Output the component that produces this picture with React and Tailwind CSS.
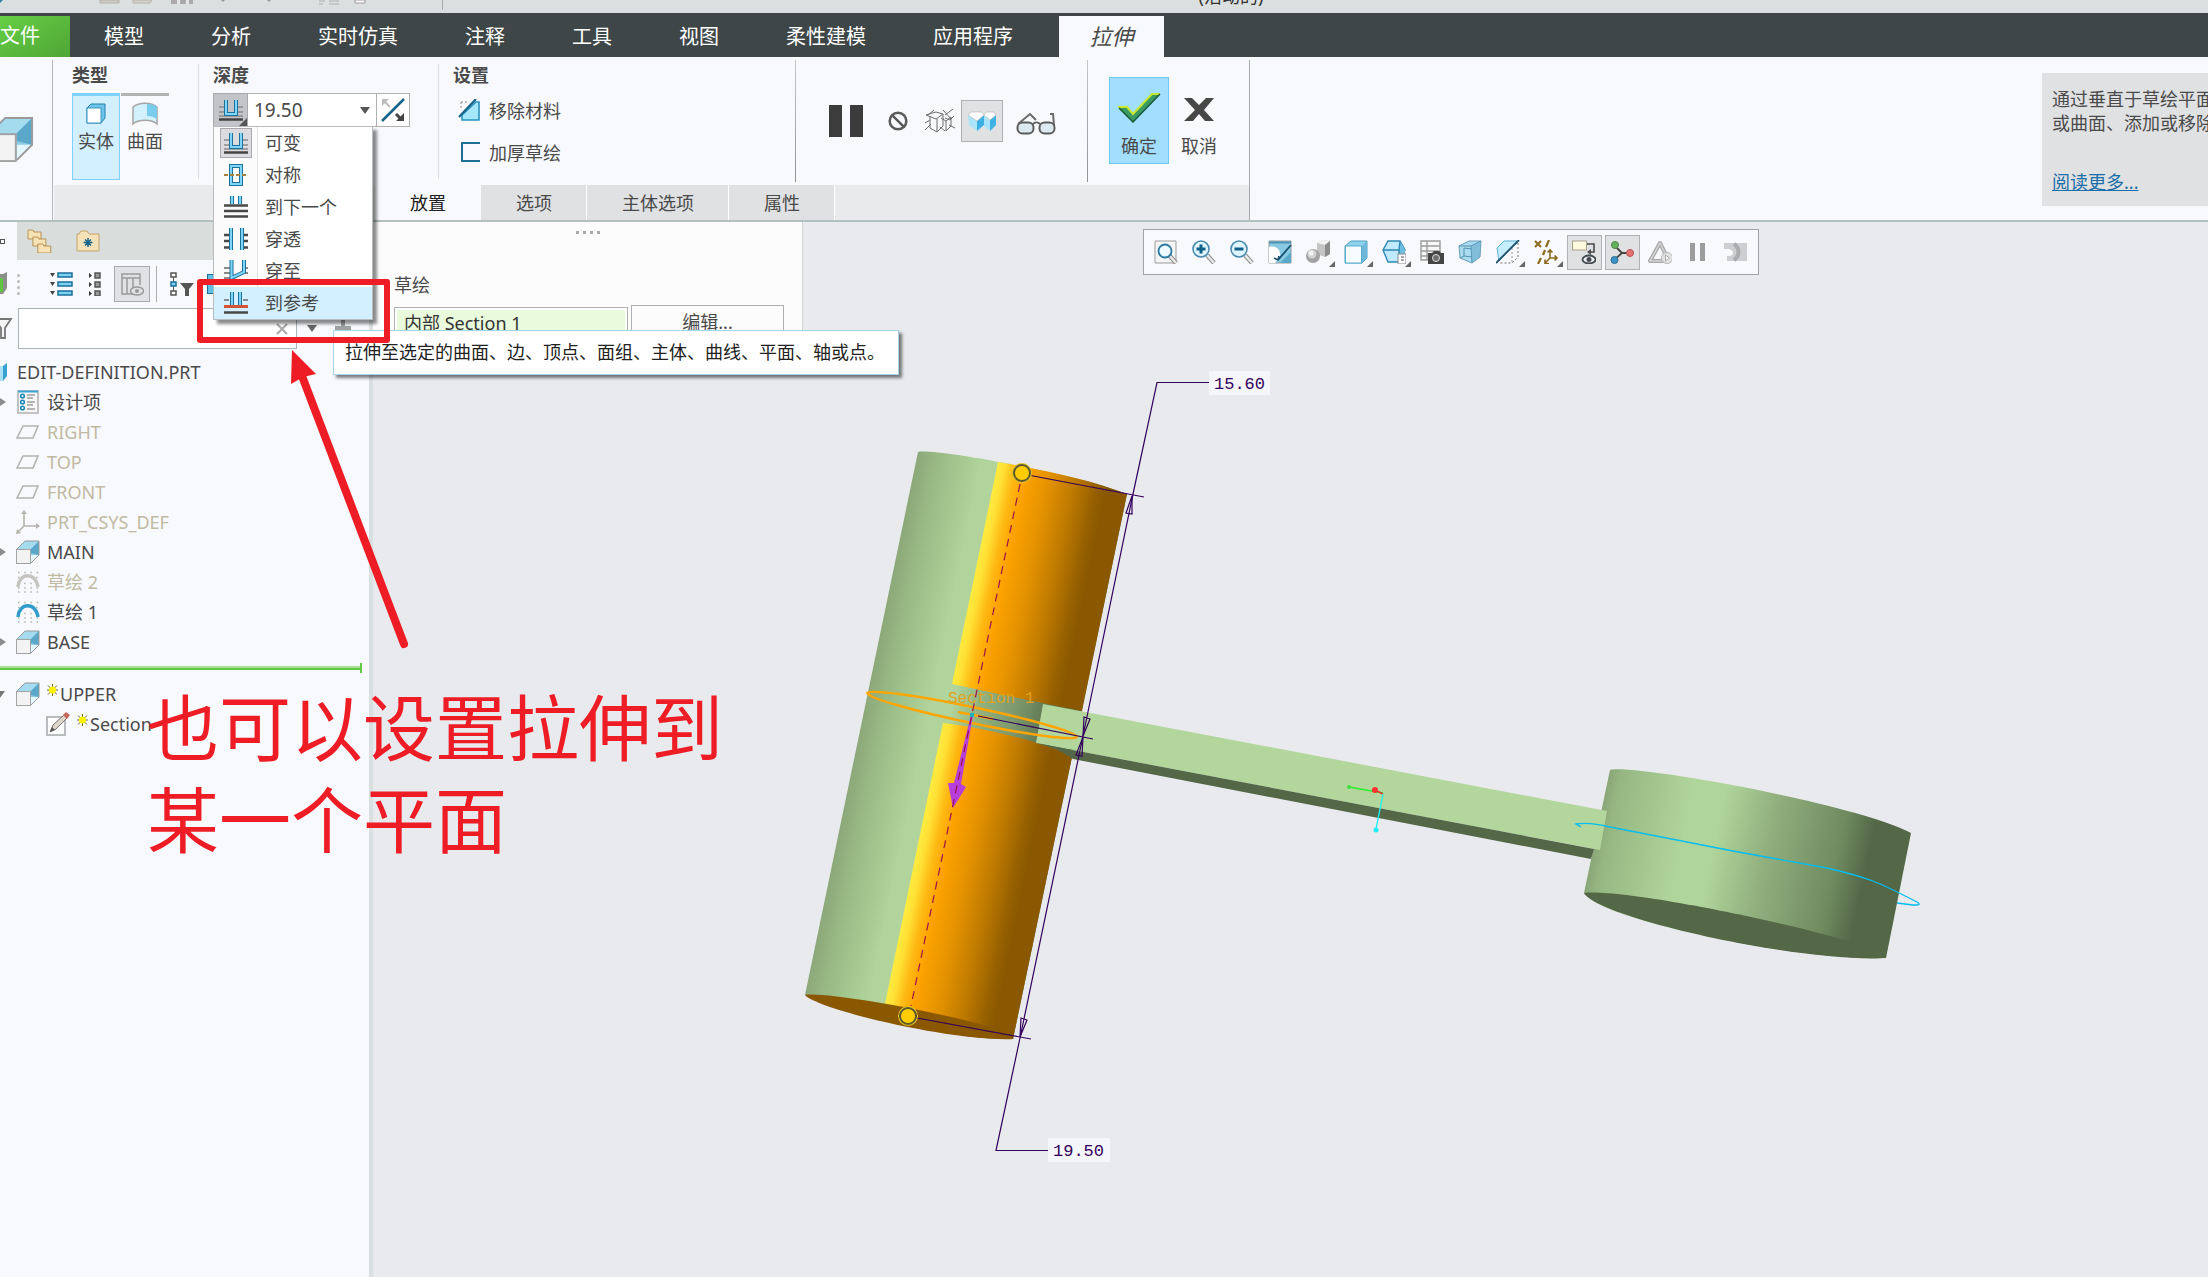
import { Ban } from 'lucide-react'

function Icon({ w = 24, h = 24, children }) {
  return (
    <svg width={w} height={h} viewBox={`0 0 ${w} ${h}`} fill="none" className="block shrink-0" aria-hidden="true">
      {children}
    </svg>
  )
}

/* ---------- feature icons ---------- */

function ExtrudeIcon({ size = 24 }) {
  return (
    <svg width={size} height={size} viewBox="0 0 24 24" fill="none" className="block shrink-0" aria-hidden="true">
      <path d="M1 9 9 1h14v14l-8 8z" fill="#8ccbe4" />
      <path d="M1 9 9 1h14l-8 8z" fill="#a5dbef" />
      <path d="M23 1v14l-8-2V9z" fill="#5ba7c9" />
      <path d="M23 15l-8 8v-8z" fill="#e2f7ff" />
      <path d="M1 9 9 1h14v14l-8 8" stroke="#9a9a9a" />
      <rect x="0.5" y="9.5" width="14" height="14" fill="#f3f3f3" stroke="#a3a3a3" />
    </svg>
  )
}

function DatumPlaneIcon() {
  return (
    <Icon>
      <path d="M1 18 7 6h15l-5 12z" stroke="#b3b3b0" strokeWidth="1.6" />
    </Icon>
  )
}

function CsysIcon() {
  return (
    <Icon>
      <path d="M8 1v15h15M8 16l-7 7" stroke="#b5b3ae" strokeWidth="1.6" />
      <path d="M8 0l3 4H5zM24 16l-4-3v6zM0 24l1-5 4 4z" fill="#b5b3ae" />
    </Icon>
  )
}

function SketchIcon({ dim }) {
  return (
    <Icon>
      <path
        d="M2 2.5h21M2 7.5h3M20 7.5h3M8 13.5h10M2 18h21M2 22h21"
        stroke="#b8b8b8"
        strokeWidth="1.4"
        strokeDasharray="1.6 4.6"
      />
      <path d="M2 17C3 2 20 2 22 17" stroke={dim ? '#c6c4c0' : '#2f9ccb'} strokeWidth="3.400" />
    </Icon>
  )
}

function DesignItemsIcon() {
  return (
    <Icon>
      <rect x="2" y="1" width="20" height="22" fill="#f7f7f7" stroke="#b0b0b0" strokeWidth="1.5" />
      <path d="M2 1.5h20" stroke="#3aa4d4" strokeWidth="2" />
      <path d="M11 5h8M11 8h6M11 12h8M11 15h6M11 19h8" stroke="#a0a0a0" strokeWidth="1.4" />
      {[6, 12, 18].map((y) => (
        <circle key={y} cx="6.5" cy={y} r="1.8" fill="#fff" stroke="#1a86b8" strokeWidth="1.6" />
      ))}
    </Icon>
  )
}

function EditSketchIcon() {
  return (
    <Icon>
      <rect x="1" y="5" width="18" height="18" fill="#fff" stroke="#a8adad" strokeWidth="1.6" />
      <path d="M4 20l3-7L18 3l3 3L10 17z" fill="#dcd6cc" stroke="#77736c" />
      <path d="M17 3l3-3 4 3-3 4z" fill="#c56a5c" />
      <path d="M4 20l2-5 3 3z" fill="#555" />
    </Icon>
  )
}

function NewStar() {
  return (
    <Icon w={11} h={12}>
      <path d="M5.5 0v12M0 6h11M1 1.500l9 9M10 1.500l-9 9" stroke="#6b6b20" />
      <circle cx="5.500" cy="6" r="3.500" fill="#fff200" />
    </Icon>
  )
}

/* ---------- depth option icons ---------- */

function Rails({ d }) {
  return (
    <>
      <path d={d} stroke="#1d7099" strokeWidth="4" />
      <path d={d} stroke="#7fd6fb" strokeWidth="2" />
    </>
  )
}

function BlindIcon() {
  return (
    <Icon h={22}>
      <path d="M0 8h5M19 8h5M0 13h5M19 13h5M0 17h24" stroke="#8b8b8b" strokeWidth="1.5" />
      <path d="M0 20.500h24" stroke="#444" strokeWidth="2.500" />
      <Rails d="M7 1v14h10V1" />
    </Icon>
  )
}

function SymmetricIcon() {
  return (
    <Icon h={22}>
      <Rails d="M7 2h10v18H7z" />
      <path d="M0 11h24" stroke="#a3823f" strokeWidth="2" strokeDasharray="4 2" />
    </Icon>
  )
}

function ToNextIcon() {
  return (
    <Icon h={22}>
      <Rails d="M8 0v8M16 0v8" />
      <path d="M0 9.500h24M0 15h24M0 20.500h24" stroke="#484848" strokeWidth="2.500" />
    </Icon>
  )
}

function ThroughAllIcon() {
  return (
    <Icon h={22}>
      <path d="M0 7h5M20 7h4M0 13h5M20 13h4M0 19.500h5M20 19.500h4" stroke="#484848" strokeWidth="2.500" />
      <Rails d="M7 0v22M18 0v22" />
    </Icon>
  )
}

function ThroughUntilIcon() {
  return (
    <Icon h={22}>
      <path d="M0 8h6M20 8h4M0 13h6M20 13h4M0 18h6" stroke="#8b8b8b" strokeWidth="1.800" />
      <Rails d="M7.500 0v18L20 12V0" />
    </Icon>
  )
}

function ToReferenceIcon() {
  return (
    <Icon h={22}>
      <path d="M0 8h5M19 8h5" stroke="#8b8b8b" strokeWidth="2" />
      <Rails d="M8 0v13M16 0v13" />
      <path d="M0 14.500h24" stroke="#d4543a" strokeWidth="3" />
      <path d="M0 20.500h24" stroke="#484848" strokeWidth="2.500" />
    </Icon>
  )
}

/* ---------- graphics toolbar icons ---------- */

const lens = (
  <>
    <path d="M15 15l7 8" stroke="#8d8d8d" strokeWidth="4.500" />
    <path d="M15 15l7 8" stroke="#e8e8e8" strokeWidth="2.500" />
  </>
)

const viewTools = [
  {
    name: '重新调整',
    art: (
      <>
        <path d="M1 1h21v22H1z" fill="#f4f4f4" stroke="#9d9d9d" />
        {lens}
        <circle cx="11" cy="11" r="6.500" fill="#eefaff" stroke="#2a78a4" strokeWidth="1.800" />
      </>
    ),
  },
  {
    name: '放大',
    art: (
      <>
        {lens}
        <circle cx="9" cy="9" r="8" fill="#dff5ff" stroke="#4a8cb0" strokeWidth="1.600" />
        <path d="M4.500 9h9M9 4.500v9" stroke="#135f8c" strokeWidth="3" />
      </>
    ),
  },
  {
    name: '缩小',
    art: (
      <>
        {lens}
        <circle cx="9" cy="9" r="8" fill="#dff5ff" stroke="#4a8cb0" strokeWidth="1.600" />
        <path d="M4.500 9h9" stroke="#135f8c" strokeWidth="3" />
      </>
    ),
  },
  {
    name: '重画',
    art: (
      <>
        <path d="M1 1h22v22H1z" fill="#8ac9e2" stroke="#9a9a9a" />
        <path d="M12 23L23 12v11z" fill="#5aa9c9" />
        <path d="M1 7c7-2 12 3 11 9l-5 7H1z" fill="#fff" />
        <path d="M23 5L10 20" stroke="#16506f" strokeWidth="1.800" />
        <path d="M6 18l4 2 1-4" stroke="#16506f" strokeWidth="1.500" />
        <path d="M1 2.500h22" stroke="#4a93b5" strokeWidth="2" />
      </>
    ),
  },
  {
    name: '渲染选项',
    more: true,
    art: (
      <>
        <path d="M11 3l5-3 8 1v13l-5 3-8-3z" fill="#c4c4c4" />
        <path d="M11 3l5-3 8 1-5 4z" fill="#f2f2f2" />
        <path d="M19 5l5-4v13l-5 3z" fill="#8c8c8c" />
        <circle cx="7" cy="16" r="7" fill="#a2a2a2" />
        <circle cx="6" cy="14" r="4.500" fill="#d2d2d2" />
        <circle cx="5" cy="13" r="2.500" fill="#f2f2f2" />
      </>
    ),
  },
  {
    name: '显示样式',
    more: true,
    art: (
      <>
        <path d="M1 6l6-5h16v17l-5 5H1z" fill="#8ed3ee" stroke="#4f9fc2" />
        <path d="M18 6l5-5v17l-5 5z" fill="#6bb8da" />
        <rect x="1.500" y="6" width="16" height="17" fill="#f6fcff" stroke="#5badcf" />
      </>
    ),
  },
  {
    name: '已保存方向',
    more: true,
    art: (
      <>
        <path d="M6 1h12l5 9-5 12H6L1 10z" fill="#bfeaff" stroke="#2e88b3" strokeWidth="1.400" />
        <path d="M18 1l5 9v8l-6 4V10z" fill="#6dbfe2" />
        <path d="M1 10h16v12M17 10l1-9" stroke="#2e88b3" strokeWidth="1.400" />
        <rect x="16" y="14" width="8" height="10" fill="#fff" stroke="#8a8a8a" />
        <path d="M19 17h3M19 20h3" stroke="#555" />
      </>
    ),
  },
  {
    name: '视图管理器',
    art: (
      <>
        <path d="M1 1h19v19H1zM1 6h19M1 11h19M1 16h10M7 1v19" fill="#f7f7f7" stroke="#9c9c9c" strokeWidth="1.400" />
        <path d="M8 13h4l2-2h5l2 2h3v11H8z" fill="#454545" />
        <circle cx="16" cy="18" r="3.500" fill="#6d6d6d" stroke="#ddd" />
      </>
    ),
  },
  {
    name: '透视图',
    art: (
      <>
        <path d="M1 6l10-5h12l-1 16-8 6L2 18z" fill="#a9dcf0" stroke="#6d9fb7" />
        <path d="M1 6h12l10-5M13 6l1 17M6 8l8 1M6 8v8l8 1M2 18l4-2" stroke="#5590ae" />
        <path d="M13 6l10-5-1 16-8 6z" fill="#69aacb" opacity="0.600" />
      </>
    ),
  },
  {
    name: '截面',
    more: true,
    art: (
      <>
        <path d="M1 8l7-7h13L3 21z" fill="#c5eeff" stroke="#5fb3d6" />
        <path d="M22 3v14l-6 6H3" stroke="#777" strokeDasharray="2 2" />
        <path d="M16 8v15" stroke="#999" strokeDasharray="2 2" />
        <path d="M23 0L0 23" stroke="#1b4f70" strokeWidth="1.800" />
      </>
    ),
  },
  {
    name: '基准显示过滤器',
    more: true,
    art: (
      <>
        <path d="M1 1l6 6M7 1L1 7" stroke="#8b6a1e" strokeWidth="2" />
        <path d="M15 0l-3 7M11 10l-2 5M7 18l-3 6" stroke="#8b6a1e" strokeWidth="2.200" />
        <path d="M16 10v8h7M16 18l-5 5M13.500 12.500L16 10l2.500 2.500M20.500 15.500L23 18l-2.500 2.500M11 19.500v4h4" stroke="#8b6a1e" strokeWidth="1.600" />
      </>
    ),
  },
  {
    name: '注释显示',
    on: true,
    art: (
      <>
        <rect x="0.500" y="1" width="14" height="9" fill="#fffbe0" stroke="#a5a08a" />
        <path d="M15 4h7v8h-5" stroke="#4a4a4a" strokeWidth="1.600" />
        <path d="M19 9l-4 3 4 3z" fill="#4a4a4a" />
        <ellipse cx="17" cy="19.500" rx="6.500" ry="4" fill="#eee" stroke="#3f4a50" strokeWidth="1.800" />
        <circle cx="17" cy="19.500" r="2.500" fill="#3f4a50" />
      </>
    ),
  },
  {
    name: '旋转中心',
    on: true,
    art: (
      <>
        <path d="M5 6l7 7 8 0M12 13l-8 7" stroke="#444" strokeWidth="1.800" />
        <circle cx="5" cy="5" r="3.500" fill="#63b35b" stroke="#4a8645" />
        <circle cx="20" cy="13" r="3.500" fill="#e87171" stroke="#b55353" />
        <circle cx="4.500" cy="20" r="3.500" fill="#3c92c4" stroke="#2b6d95" />
      </>
    ),
  },
  {
    name: '仿真',
    art: (
      <>
        <path d="M12 3L2 21h19z" stroke="#a8a8a8" strokeWidth="4" strokeLinejoin="round" />
        <path d="M12 3L2 21h19z" stroke="#d4d4d4" strokeWidth="1.500" />
        <circle cx="19" cy="18" r="5.500" fill="#e4e4e4" stroke="#b5b5b5" />
        <path d="M17.500 15l4 3-4 3z" fill="#fff" stroke="#a8a8a8" />
      </>
    ),
  },
  { name: '暂停仿真', art: <path d="M4 3h5v18H4zM14 3h5v18h-5z" fill="#9c9c9c" /> },
  {
    name: '停止仿真',
    art: (
      <>
        <path d="M0 3h23v18H3v-5c8 1 8-7 0-7H0z" fill="#cccecf" />
        <path d="M10 4c6 4 6 12 0 16" stroke="#a9abad" strokeWidth="4" />
      </>
    ),
  },
]

/* ---------- data ---------- */

const ribbonTabs = ['模型', '分析', '实时仿真', '注释', '工具', '视图', '柔性建模', '应用程序']

const depthOptions = [
  { label: '可变', icon: <BlindIcon />, current: true },
  { label: '对称', icon: <SymmetricIcon /> },
  { label: '到下一个', icon: <ToNextIcon /> },
  { label: '穿透', icon: <ThroughAllIcon /> },
  { label: '穿至', icon: <ThroughUntilIcon /> },
  { label: '到参考', icon: <ToReferenceIcon />, hover: true },
]

const treeItems = [
  { label: '设计项', icon: <DesignItemsIcon />, expand: true },
  { label: 'RIGHT', icon: <DatumPlaneIcon />, dim: true },
  { label: 'TOP', icon: <DatumPlaneIcon />, dim: true },
  { label: 'FRONT', icon: <DatumPlaneIcon />, dim: true },
  { label: 'PRT_CSYS_DEF', icon: <CsysIcon />, dim: true },
  { label: 'MAIN', icon: <ExtrudeIcon />, expand: true },
  { label: '草绘 2', icon: <SketchIcon dim />, dim: true },
  { label: '草绘 1', icon: <SketchIcon /> },
  { label: 'BASE', icon: <ExtrudeIcon />, expand: true },
]

/* ---------- top bars ---------- */

function TitleStrip() {
  return (
    <header className="h-[13px] bg-[#dae0df] overflow-hidden flex">
      <svg width="450" height="13" className="block shrink-0" aria-hidden="true">
        <path d="M0 0h3l-3 3z" fill="#2b7fa8" />
        <path d="M100 0h19v3h-19z" fill="#cfcbc6" stroke="#b5b1ac" />
        <path d="M133 0h19l-2 3h-17z" fill="#d5d2cb" stroke="#b5b1ac" />
        <path d="M171 0h22v4h-22z" fill="#aaa" />
        <path d="M177 0h3v4h-3zM186 0h3v4h-3z" fill="#e5e5e5" />
        <path d="M221 0h4l-2 2zM267 0h4l-2 2z" fill="#9a9a9a" />
        <path d="M319 1h6M329 1h10M319 4h4M329 4h10" stroke="#b0b0b0" />
        <path d="M355 0h10v3h-10z" fill="#fff" stroke="#999" />
        <path d="M442.500 0v10" stroke="#a9aeae" />
      </svg>
      <h1 className="flex-1 pl-56 -mt-3 text-center text-lg leading-4 text-[#333]">
        (活动的)
      </h1>
      <span className="w-[420px]" />
    </header>
  )
}

function RibbonTabs() {
  return (
    <nav className="h-11 bg-[#3e4647] flex items-end gap-px text-xl text-white">
      <button className="w-[70px] h-[41px] pb-px text-left bg-linear-to-br from-[#66cf45] to-[#4fa535]">文件</button>
      {ribbonTabs.map((tab) => (
        <button key={tab} className="h-[41px] px-[33px]">
          {tab}
        </button>
      ))}
      <button className="ml-3 h-[41px] w-[105px] bg-[#f8f9fc] text-[#4a4a4a] text-[22px] italic">拉伸</button>
    </nav>
  )
}

/* ---------- ribbon ---------- */

function Divider() {
  return <span className="mt-[3px] w-px h-[122px] shrink-0 bg-linear-to-b from-[#c4c6c8] to-[#8f9294]" />
}

function GroupDivider() {
  return <span className="mt-[7px] w-px h-[115px] shrink-0 bg-[#dcdde0]" />
}

function GroupTitle({ children }) {
  return <h2 className="text-lg leading-5 font-bold text-[#4a4a4a]">{children}</h2>
}

function TypeGroup() {
  return (
    <section className="pt-2 pl-[18px] pr-[29px]">
      <GroupTitle>类型</GroupTitle>
      <div className="mt-2 flex gap-px text-lg leading-6">
        <button className="w-12 h-[87px] border border-t-3 border-[#7fd0fb] bg-[#d2f0ff] flex flex-col items-center pt-[6px] gap-[3px]">
          <Icon w={22}>
            <path d="M2 6l4-4h14v14l-4 5H2z" fill="#6fc4ea" stroke="#2481ad" />
            <rect x="2" y="6" width="14" height="15" fill="#fff" stroke="#3d96c0" />
          </Icon>
          实体
        </button>
        <button className="w-12 h-[87px] border-t-3 border-[#b3b3b3] flex flex-col items-center pt-[6px] gap-[3px]">
          <Icon w={26}>
            <path d="M1 5C7 0 19 0 25 5v17c-5-5-19-5-24 0z" fill="#d2f1fc" stroke="#a5a5a5" strokeWidth="1.500" />
            <path d="M15 2c5 0 8 1 10 3v12c-3-2-6-3-10-3z" fill="#79ccec" />
          </Icon>
          曲面
        </button>
      </div>
    </section>
  )
}

function DepthMenu() {
  return (
    <div
      role="menu"
      className="absolute left-0 top-[33px] w-40 bg-[#fbfbfc] border border-[#b7bcbe] shadow-[4px_4px_3px_rgba(0,0,0,0.45)]"
    >
      {depthOptions.map(({ label, icon, current, hover }) => (
        <button
          key={label}
          role="menuitem"
          className={`flex w-full h-8 items-center text-lg leading-6 ${hover ? 'bg-[#d2f0ff]' : ''}`}
        >
          <span className="w-[43px] flex justify-center">
            <span className={current ? 'p-[3px] border border-[#a9a9ad] bg-[#dcdce0]' : ''}>{icon}</span>
          </span>
          <span className={`flex-1 h-full pl-[7px] text-left leading-8 border-l ${hover ? 'border-transparent' : 'border-[#dfe0e2] bg-white'}`}>
            {label}
          </span>
        </button>
      ))}
    </div>
  )
}

function DepthGroup() {
  return (
    <section className="pt-2 pl-[14px] pr-7">
      <GroupTitle>深度</GroupTitle>
      <div className="relative z-20 mt-2 flex h-[34px]">
        <button aria-label="深度选项" className="relative w-[35px] border border-[#a9a9ad] bg-[#c3c3ca] flex items-center justify-center">
          <BlindIcon />
          <span className="absolute right-0 bottom-0 border-4 border-transparent border-r-[#555] border-b-[#555]" />
        </button>
        <div className="w-32 flex items-center border-y border-[#b0b0b0] bg-white pr-[6px]">
          <input aria-label="深度值" defaultValue="19.50" className="w-full min-w-0 pl-[6px] text-[19px] outline-none" />
          <span className="border-x-5 border-t-7 border-x-transparent border-t-[#555]" />
        </div>
        <button aria-label="反向" className="w-[34px] border border-[#b0b0b0] bg-white flex items-center justify-center">
          <Icon>
            <path d="M23 1L1 23" stroke="#17648c" strokeWidth="2.500" />
            <path d="M1 1h7L1 8z" fill="#bbb" />
            <path d="M4 4l5 5" stroke="#bbb" strokeWidth="2" />
            <path d="M23 23h-8l8-8z" fill="#444" />
            <path d="M15 16l5 5" stroke="#444" strokeWidth="3" />
          </Icon>
        </button>
        <DepthMenu />
        <div
          role="tooltip"
          className="absolute left-[120px] top-[237px] h-[45px] w-[566px] pl-[11px] bg-white border border-[#a8d4e8] shadow-[3px_3px_3px_rgba(0,0,0,0.5)] text-lg leading-[43px] text-[#222] whitespace-nowrap"
        >
          拉伸至选定的曲面、边、顶点、面组、主体、曲线、平面、轴或点。
        </div>
      </div>
    </section>
  )
}

function SettingsGroup() {
  return (
    <section className="pt-2 pl-[14px] w-[356px]">
      <GroupTitle>设置</GroupTitle>
      <div className="mt-[5px] pl-[5px] text-lg">
        <button className="flex h-[42px] items-center gap-2">
          <Icon w={23}>
            <path d="M3 3h8M3 3v8" stroke="#888" strokeDasharray="2 2" />
            <path d="M4 21v-5L18 3h3v18z" fill="#a5e8fd" stroke="#2b93c0" strokeWidth="1.600" />
            <path d="M1 18L18 0" stroke="#17648c" strokeWidth="2.200" />
          </Icon>
          移除材料
        </button>
        <button className="flex h-[42px] items-center gap-2">
          <Icon w={23}>
            <path d="M22 2H4v18h18" stroke="#1f6f96" strokeWidth="2" />
          </Icon>
          加厚草绘
        </button>
      </div>
    </section>
  )
}

function PreviewGroup() {
  return (
    <section className="flex items-center pl-[33px] pr-[18px]">
      <button aria-label="暂停">
        <Icon w={34} h={32}>
          <path d="M0 0h13v32H0zM21 0h13v32H21z" fill="#3c3c3c" />
        </Icon>
      </button>
      <button aria-label="无预览" className="ml-[14px] size-[42px] flex items-center justify-center">
        <Ban size={20} strokeWidth={3} color="#5a5a5a" />
      </button>
      <button aria-label="分离预览" className="size-[42px] flex items-center justify-center">
        <Icon w={30}>
          <path d="M1 6l10 4 7-5-7-2zM5 7v12l7 4V10M12 23l6-6V5M20 9l5 2 4-4M16 9l5 3v10l5-5V8M21 12l5-4M0 14l5-3M0 21l6-6M9 1l-6 5M18 1l8 9M28 0l-8 6M20 22l-5-4M30 19l-6-3" stroke="#6e6e6e" />
        </Icon>
      </button>
      <button aria-label="连接预览" className="size-[42px] flex items-center justify-center bg-[#e0e1e3] border border-[#b0b1b3]">
        <Icon w={30}>
          <path d="M1 6l9 6v10l-8-6zM17 6l6 5v11l-6-5z" fill="#aae4fb" />
          <path d="M10 12l7-6v10l-7 6zM23 11l6-5v10l-6 6z" fill="#3eb1e4" />
          <path d="M1 6l3-3h11l2 3-7 6zM17 6l2-3h8l2 3-6 5z" fill="#fff" stroke="#b9b9b9" strokeWidth="0.700" />
        </Icon>
      </button>
      <button aria-label="几何预览" className="w-[66px] pt-[6px] flex justify-center">
        <Icon w={40}>
          <path d="M2 12L14 2l6 6M38 13l-1-11h-3" stroke="#6a6a6a" strokeWidth="2" />
          <rect x="1.500" y="10.500" width="16" height="11" rx="5" fill="#dbe9f1" stroke="#5c5c5c" strokeWidth="2" />
          <rect x="23.500" y="10.500" width="15" height="11" rx="5" fill="#dbe9f1" stroke="#5c5c5c" strokeWidth="2" />
          <path d="M17 12c2-2 5-2 7 0" stroke="#5c5c5c" strokeWidth="2" />
        </Icon>
      </button>
    </section>
  )
}

function ConfirmGroup() {
  return (
    <section className="flex pl-[21px] pr-5 pt-5 text-lg leading-6">
      <button className="w-[60px] h-[87px] bg-[#a2dfff] border border-[#6cc8f5] flex flex-col items-center pt-[14px] gap-[11px]">
        <Icon w={44} h={31}>
          <path d="M1 15l8-1 7 8L35 2h8L16 30z" fill="#3a9a63" />
          <path d="M1 15h9l6 7L35 2h8" stroke="#c6e82c" strokeWidth="2" />
          <path d="M43 2L16 30 2 16" stroke="#1b5a38" strokeWidth="1.500" />
        </Icon>
        确定
      </button>
      <button className="w-[60px] h-[87px] flex flex-col items-center pt-[15px] gap-[11px]">
        <Icon w={30} h={31}>
          <path d="M0 6h8l7 7 7-7h8L20 18l10 11h-9l-6-7-6 7H0l11-11z" fill="#474747" />
        </Icon>
        取消
      </button>
    </section>
  )
}

function Ribbon() {
  return (
    <div className="relative z-10 flex bg-[#f8f9fc] border-b-2 border-[#b4c0c0]">
      <div className="w-[52px] flex justify-end pt-[59px] pr-[18px] overflow-hidden">
        <ExtrudeIcon size={46} />
      </div>
      <span className="mt-[3px] mr-px w-px shrink-0 bg-[#b5b8ba]" />
      <div className="flex flex-col text-[#4a4a4a]">
        <div className="flex h-32">
          <TypeGroup />
          <GroupDivider />
          <DepthGroup />
          <GroupDivider />
          <SettingsGroup />
          <Divider />
          <PreviewGroup />
          <Divider />
          <ConfirmGroup />
        </div>
        <div className="flex h-[35px] pl-[321px] bg-[#e9eaeb] text-lg">
          <button className="px-[35px] bg-[#f8f9fc] text-[#222]">放置</button>
          {['选项', '主体选项', '属性'].map((tab) => (
            <button key={tab} className="pl-[35px] pr-[34px] bg-[#e0e1e3] border-r border-white">
              {tab}
            </button>
          ))}
        </div>
      </div>
      <span className="mt-[3px] w-px shrink-0 bg-[#a5a8aa]" />
      <div className="flex-1 flex justify-end items-start overflow-hidden">
        <aside className="mt-4 w-[166px] h-[133px] pl-[10px] pt-[14px] bg-[#e0e1e3] text-lg leading-6 text-[#4a4a4a] whitespace-nowrap overflow-hidden">
          <p>通过垂直于草绘平面</p>
          <p>或曲面、添加或移除</p>
          <a href="#more" className="mt-[35px] block text-[#1a6ea8] underline">
            阅读更多...
          </a>
        </aside>
      </div>
    </div>
  )
}

/* ---------- model tree ---------- */

function TreeTools() {
  return (
    <div className="flex h-12 items-center">
      <Icon w={8}>
        <path d="M0 2h3l4-2v16l-4 6H0z" fill="#8d8d8d" />
        <path d="M0 6h3v14H0z" fill="#5fc53f" />
      </Icon>
      <span className="ml-[9px] flex flex-col gap-[3px]">
        {[0, 1, 2, 3].map((i) => (
          <span key={i} className="size-[3px] rounded-full bg-[#b9bcbc]" />
        ))}
      </span>
      <button aria-label="全部展开" className="ml-[29px]">
        <Icon w={26}>
          {[3, 12, 21].map((y) => (
            <g key={y}>
              <path d={`M1 ${y - 2}h5l-2.500 4z`} fill="#444" />
              <rect x="9" y={y - 2} width="14" height="4" fill="#7ad2f5" stroke="#1d6f99" strokeWidth="1.500" />
            </g>
          ))}
        </Icon>
      </button>
      <button aria-label="全部折叠" className="ml-[13px]">
        <Icon w={14}>
          {[3, 12, 21].map((y) => (
            <g key={y}>
              <path d={`M1 ${y - 2}v5l3-2.500z`} fill="#333" />
              <rect x="7" y={y - 2} width="5" height="5" fill="#999" stroke="#555" strokeWidth="1.500" />
            </g>
          ))}
        </Icon>
      </button>
      <button aria-label="显示列" className="ml-3 size-9 flex items-center justify-center bg-[#dfe1e3] border border-[#a9a9ad]">
        <Icon>
          <path d="M2 2h18v4H2zM2 6v16h5V6M7 22h6V6M20 6v7" stroke="#9a9a9a" strokeWidth="1.500" />
          <ellipse cx="17" cy="19" rx="6.500" ry="4" fill="#dfe1e3" stroke="#9a9a9a" strokeWidth="1.500" />
          <circle cx="17" cy="19" r="2" fill="#9a9a9a" />
        </Icon>
      </button>
      <span className="ml-[6px] w-px h-9 bg-[#a9adaf]" />
      <button aria-label="树过滤器" className="ml-3">
        <Icon w={26}>
          <path d="M4.500 4v16" stroke="#555" />
          <path d="M2 1h5v4H2zM2 19h5v4H2z" fill="#fff" stroke="#555" strokeWidth="1.500" />
          <path d="M2 10h5v4H2z" fill="#7ad2f5" stroke="#1d6f99" strokeWidth="1.500" />
          <path d="M11 11h14l-5 6v7h-4v-7z" fill="#555" />
        </Icon>
      </button>
      <button aria-label="树列" className="ml-3 w-[10px] h-5 bg-[#5fc0e6] border border-[#1d6f99]" />
    </div>
  )
}

function TreeRow({ label, icon, expand, dim }) {
  return (
    <li className={`flex h-[30px] items-center ${dim ? 'text-[#c0b9a3]' : ''}`}>
      <span className="w-4">
        {expand && <span className="block size-0 border-y-4 border-l-6 border-y-transparent border-l-[#8a8d8e]" />}
      </span>
      {icon}
      <span className="ml-[7px]">{label}</span>
    </li>
  )
}

function ModelTree() {
  return (
    <aside className="w-[373px] shrink-0 bg-[#f8f9fc] border-r-4 border-[#dadfe0] text-[#4a4a4a]">
      <div className="flex h-[38px]">
        <span className="w-[17px] flex items-center">
          <span className="size-[5px] border border-[#555]" />
        </span>
        <div className="flex-1 flex items-center gap-6 pl-[10px] bg-[#d9dedd]">
          <button aria-label="文件夹浏览器">
            <Icon w={25}>
              {[0, 7, 14].map((o) => (
                <path key={o} d={`M${o * 0.700 + 1} ${o + 1}h5l1 2h7v7h-13z`} fill="#f7e3b5" stroke="#b89254" />
              ))}
            </Icon>
          </button>
          <button aria-label="收藏夹">
            <Icon>
              <path d="M1 5h2l2-3h6l2 3h10v17H1z" fill="#f5e2b8" stroke="#c4a26a" />
              <path d="M12 9v9M7.500 13.500h9M9 10.500l6 6M15 10.500l-6 6" stroke="#17648c" strokeWidth="1.500" />
            </Icon>
          </button>
        </div>
      </div>
      <TreeTools />
      <div className="flex h-[41px] items-center">
        <Icon w={18}>
          <path d="M-6 2h17L5 11v10h-4v-10z" fill="#f3f3f3" stroke="#777" strokeWidth="1.800" />
        </Icon>
        <div className="flex w-[279px] h-[41px] items-center border border-[#a9b4b6] bg-white pr-2">
          <input aria-label="搜索模型树" className="flex-1 min-w-0 px-2 outline-none" />
          <button aria-label="清除">
            <Icon w={12} h={12}>
              <path d="M1 1l10 10M11 1L1 11" stroke="#aaa" strokeWidth="2" />
            </Icon>
          </button>
        </div>
        <span className="ml-[10px] border-x-5 border-t-7 border-x-transparent border-t-[#666]" />
        <button aria-label="添加" className="ml-[18px]">
          <Icon w={16}>
            <path d="M6 3h4v6h6v4H0V9h6z" fill="#a0a3a4" />
          </Icon>
        </button>
      </div>
      <ul className="mt-2 text-lg leading-6">
        <li className="flex h-[30px] items-center gap-[10px]">
          <Icon w={7} h={20}>
            <path d="M0 4h3l4-3v13l-4 5H0z" fill="#38a1d2" />
            <path d="M0 4h3v15H0z" fill="#a9e0f6" />
          </Icon>
          EDIT-DEFINITION.PRT
        </li>
        {treeItems.map((item) => (
          <TreeRow key={item.label} {...item} />
        ))}
      </ul>
      {/* insertion marker */}
      <div className="my-[5px] flex items-center h-3">
        <span className="w-[360px] h-1 border-b-2 border-[#63c944] bg-[#a9e197]" />
        <span className="w-[2px] h-[10px] bg-[#63c944]" />
      </div>
      <ul className="text-lg leading-6">
        <li className="flex h-[30px] items-center">
          <span className="w-4">
            <span className="block size-0 border-r-5 border-t-7 border-r-transparent border-t-[#777]" />
          </span>
          <ExtrudeIcon />
          <span className="ml-[7px] mr-[2px] mb-2">
            <NewStar />
          </span>
          UPPER
        </li>
        <li className="flex h-[30px] items-center pl-[46px]">
          <EditSketchIcon />
          <span className="ml-[7px] mr-[2px] mb-2">
            <NewStar />
          </span>
          Section
        </li>
      </ul>
    </aside>
  )
}

/* ---------- graphics window ---------- */

function PlacementPanel() {
  return (
    <section className="w-[430px] h-32 bg-[#fcfcfc] border-r border-[#cfd3d4] text-lg text-[#4a4a4a]">
      <div className="flex justify-center gap-1 pt-[9px]">
        {[0, 1, 2, 3].map((i) => (
          <span key={i} className="size-[3px] bg-[#a9a9a9]" />
        ))}
      </div>
      <div className="mt-[39px] pl-[21px]">
        <label htmlFor="sketch-ref" className="block leading-6">
          草绘
        </label>
        <div className="mt-2 flex items-start gap-[3px]">
          <input
            id="sketch-ref"
            readOnly
            value="内部 Section 1"
            className="mt-[2px] w-[234px] h-[30px] pl-[9px] bg-[#e9fbdc] border border-[#b0b0b0] ring-2 ring-inset ring-white text-[#333]"
          />
          <button className="w-[153px] h-[34px] border border-[#b0b0b0]">编辑...</button>
        </div>
      </div>
    </section>
  )
}

function ViewToolbar() {
  return (
    <div className="mt-[7px] ml-[340px] h-[46px] w-[616px] flex items-center pl-[3px] bg-[#f8f9fc] border border-[#a0a3a5]">
      {viewTools.map(({ name, art, more, on }) => (
        <button key={name} aria-label={name} className="w-[38px] flex justify-center">
          <span className={`relative size-[35px] flex items-center justify-center border ${on ? 'bg-[#e0e1e3] border-[#b0b1b3]' : 'border-transparent'}`}>
            <Icon>{art}</Icon>
            {more && <span className="absolute right-0 bottom-[2px] border-3 border-transparent border-r-[#666] border-b-[#666]" />}
          </span>
        </button>
      ))}
    </div>
  )
}

function ModelScene() {
  return (
    <svg
      className="absolute left-0 top-0 w-[1835px] h-[1055px]"
      viewBox="373 222 1835 1055"
      fill="none"
      role="img"
      aria-label="模型"
    >
      <defs>
        <linearGradient id="bodyGreen" gradientUnits="userSpaceOnUse" x1="918" y1="452" x2="1127" y2="495.600">
          <stop offset="0" stopColor="#8ca879" />
          <stop offset="0.100" stopColor="#99ba85" />
          <stop offset="0.300" stopColor="#b0d49b" />
          <stop offset="0.400" stopColor="#b0d49b" />
          <stop offset="0.520" stopColor="#93b380" />
          <stop offset="0.700" stopColor="#7c976c" />
          <stop offset="0.850" stopColor="#5d7551" />
        </linearGradient>
        <linearGradient id="bodyOrange" gradientUnits="userSpaceOnUse" x1="918" y1="452" x2="1127" y2="495.600">
          <stop offset="0.380" stopColor="#ffea3f" />
          <stop offset="0.410" stopColor="#ffe035" />
          <stop offset="0.460" stopColor="#ffb914" />
          <stop offset="0.510" stopColor="#fda300" />
          <stop offset="0.620" stopColor="#e69300" />
          <stop offset="0.750" stopColor="#bd7900" />
          <stop offset="0.850" stopColor="#966000" />
          <stop offset="0.900" stopColor="#8a5800" />
        </linearGradient>
        <linearGradient id="discGreen" gradientUnits="userSpaceOnUse" x1="1610" y1="770" x2="1911" y2="833">
          <stop offset="0" stopColor="#8aa677" />
          <stop offset="0.040" stopColor="#96b782" />
          <stop offset="0.280" stopColor="#b0d59b" />
          <stop offset="0.380" stopColor="#b0d59b" />
          <stop offset="0.550" stopColor="#91b07e" />
          <stop offset="0.780" stopColor="#708b60" />
          <stop offset="0.880" stopColor="#546848" />
        </linearGradient>
      </defs>

      {/* main cylinder */}
      <path d="M918 452C930 448 1060 470 1127 494L1013 1039C960 1041 830 1012 805 995z" fill="url(#bodyGreen)" />
      <path d="M998 462C1045 470 1092 480 1127 494L1082 711C1050 705 985 691 952 684z" fill="url(#bodyOrange)" />
      <path d="M943 723C980 727 1050 743 1072 757L1013 1039L885 1004z" fill="url(#bodyOrange)" />
      <path d="M805 995C822 991 945 1012 1000 1030L1014 1039C955 1042 818 1010 805 995z" fill="#8a5800" />

      {/* disc */}
      <path d="M1610 770C1630 764 1850 802 1911 833L1886 958C1800 961 1600 920 1584 893z" fill="url(#discGreen)" />
      <path d="M1584 893C1620 888 1790 922 1861 945L1886 958C1800 963 1598 918 1584 893z" fill="#546848" />

      {/* arm */}
      <path d="M1043 704L1607 811L1600 850L1036 743z" fill="#b2d69c" />
      <path d="M1036 743L1594 849L1591 859L1073 759L1057 749z" fill="#546848" />

      {/* disc sketch */}
      <path
        d="M1581 827l-5-3c12-2 22 0 34 3L1733 851L1827 868C1870 878 1878 882 1917 902c4 3 2 3-4 3l-16-2"
        stroke="#00bdf2"
        strokeWidth="1.300"
      />

      {/* section sketch */}
      <ellipse cx="972" cy="715" rx="107" ry="8" transform="rotate(11.800 972 715)" stroke="#ffa500" strokeWidth="2.500" />
      <path d="M958 712l35 7" stroke="#ffa500" strokeWidth="2.500" />
      <text x="948" y="703" fontSize="16" fill="#e0a21c" fontFamily="Liberation Mono, monospace">
        Section 1
      </text>

      {/* direction arrow and axis */}
      <path d="M971 715L954 783L948 783L953 808L966 787L961 784L973 715z" fill="#b63fdb" />
      <path d="M1020 484L911 1006" stroke="#a01048" strokeWidth="1.200" strokeDasharray="8 6" />
      <rect x="970" y="713" width="4" height="4" fill="#1ab0c4" />

      {/* dimensions */}
      <g stroke="#33005c" strokeWidth="1.200">
        <path d="M1209 382.500H1157L1133 494L1083 736L1020 1038L996 1150.500H1048" />
        <path d="M1028 475L1144 497M978 716L1093 739M917 1018L1031 1039" />
        <path d="M1132 496L1126 513L1132 514zM1083 736L1084 717L1090 719zM1083 737L1076 755L1082 756zM1020 1037L1021 1018L1027 1020z" />
      </g>
      {[
        [1022, 473],
        [908, 1016],
      ].map(([x, y]) => (
        <g key={x}>
          <circle cx={x} cy={y} r="10" fill="#e0c02a" />
          <circle cx={x} cy={y} r="8" fill="#ffcc00" stroke="#5f5a2c" strokeWidth="2" />
        </g>
      ))}
      <g fill="#f5f6f9">
        <rect x="1209" y="371" width="61" height="24" />
        <rect x="1048" y="1138" width="62" height="24" />
      </g>
      <g fontSize="17" fill="#33005c" fontFamily="Liberation Mono, monospace">
        <text x="1214" y="389">15.60</text>
        <text x="1053" y="1156">19.50</text>
      </g>

      {/* spin center */}
      <path d="M1349 787l34 6" stroke="#2bf02b" strokeWidth="1.300" />
      <path d="M1375 790l8 4" stroke="#ff3030" strokeWidth="1.500" />
      <path d="M1383 794l-7 35" stroke="#20f0f5" strokeWidth="1.300" />
      <circle cx="1349" cy="787" r="2" fill="#3fe03f" />
      <circle cx="1375" cy="790" r="3" fill="#ff3030" />
      <circle cx="1376" cy="830" r="2.500" fill="#20f0f5" />
    </svg>
  )
}

function GraphicsWindow() {
  return (
    <main className="relative flex-1 min-w-0 overflow-hidden bg-[#e8eaed]">
      <ModelScene />
      <div className="relative flex items-start">
        <PlacementPanel />
        <ViewToolbar />
      </div>
    </main>
  )
}

/* ---------- tutorial markup ---------- */

function Markup() {
  return (
    <div className="absolute inset-0 z-30 pointer-events-none">
      <svg className="w-full h-full" fill="none" aria-hidden="true">
        <rect x="200" y="282" width="187" height="58" stroke="#ee1c24" strokeWidth="6" strokeLinejoin="round" />
        <path d="M302 376L404 644" stroke="#ee1c24" strokeWidth="8" strokeLinecap="round" />
        <path d="M292 350L316 374L303 377L291 384z" fill="#ee1c24" />
      </svg>
      <p className="absolute left-[147px] top-[681px] text-[72px] leading-[92px] text-[#ee1c24] whitespace-nowrap">
        也可以设置拉伸到
        <br />
        某一个平面
      </p>
    </div>
  )
}

export default function App() {
  return (
    <div className="relative min-h-screen flex flex-col overflow-hidden font-['Noto_Sans','Noto_Sans_CJK_SC',sans-serif]">
      <TitleStrip />
      <RibbonTabs />
      <Ribbon />
      <div className="flex-1 flex">
        <ModelTree />
        <GraphicsWindow />
      </div>
      <Markup />
    </div>
  )
}
